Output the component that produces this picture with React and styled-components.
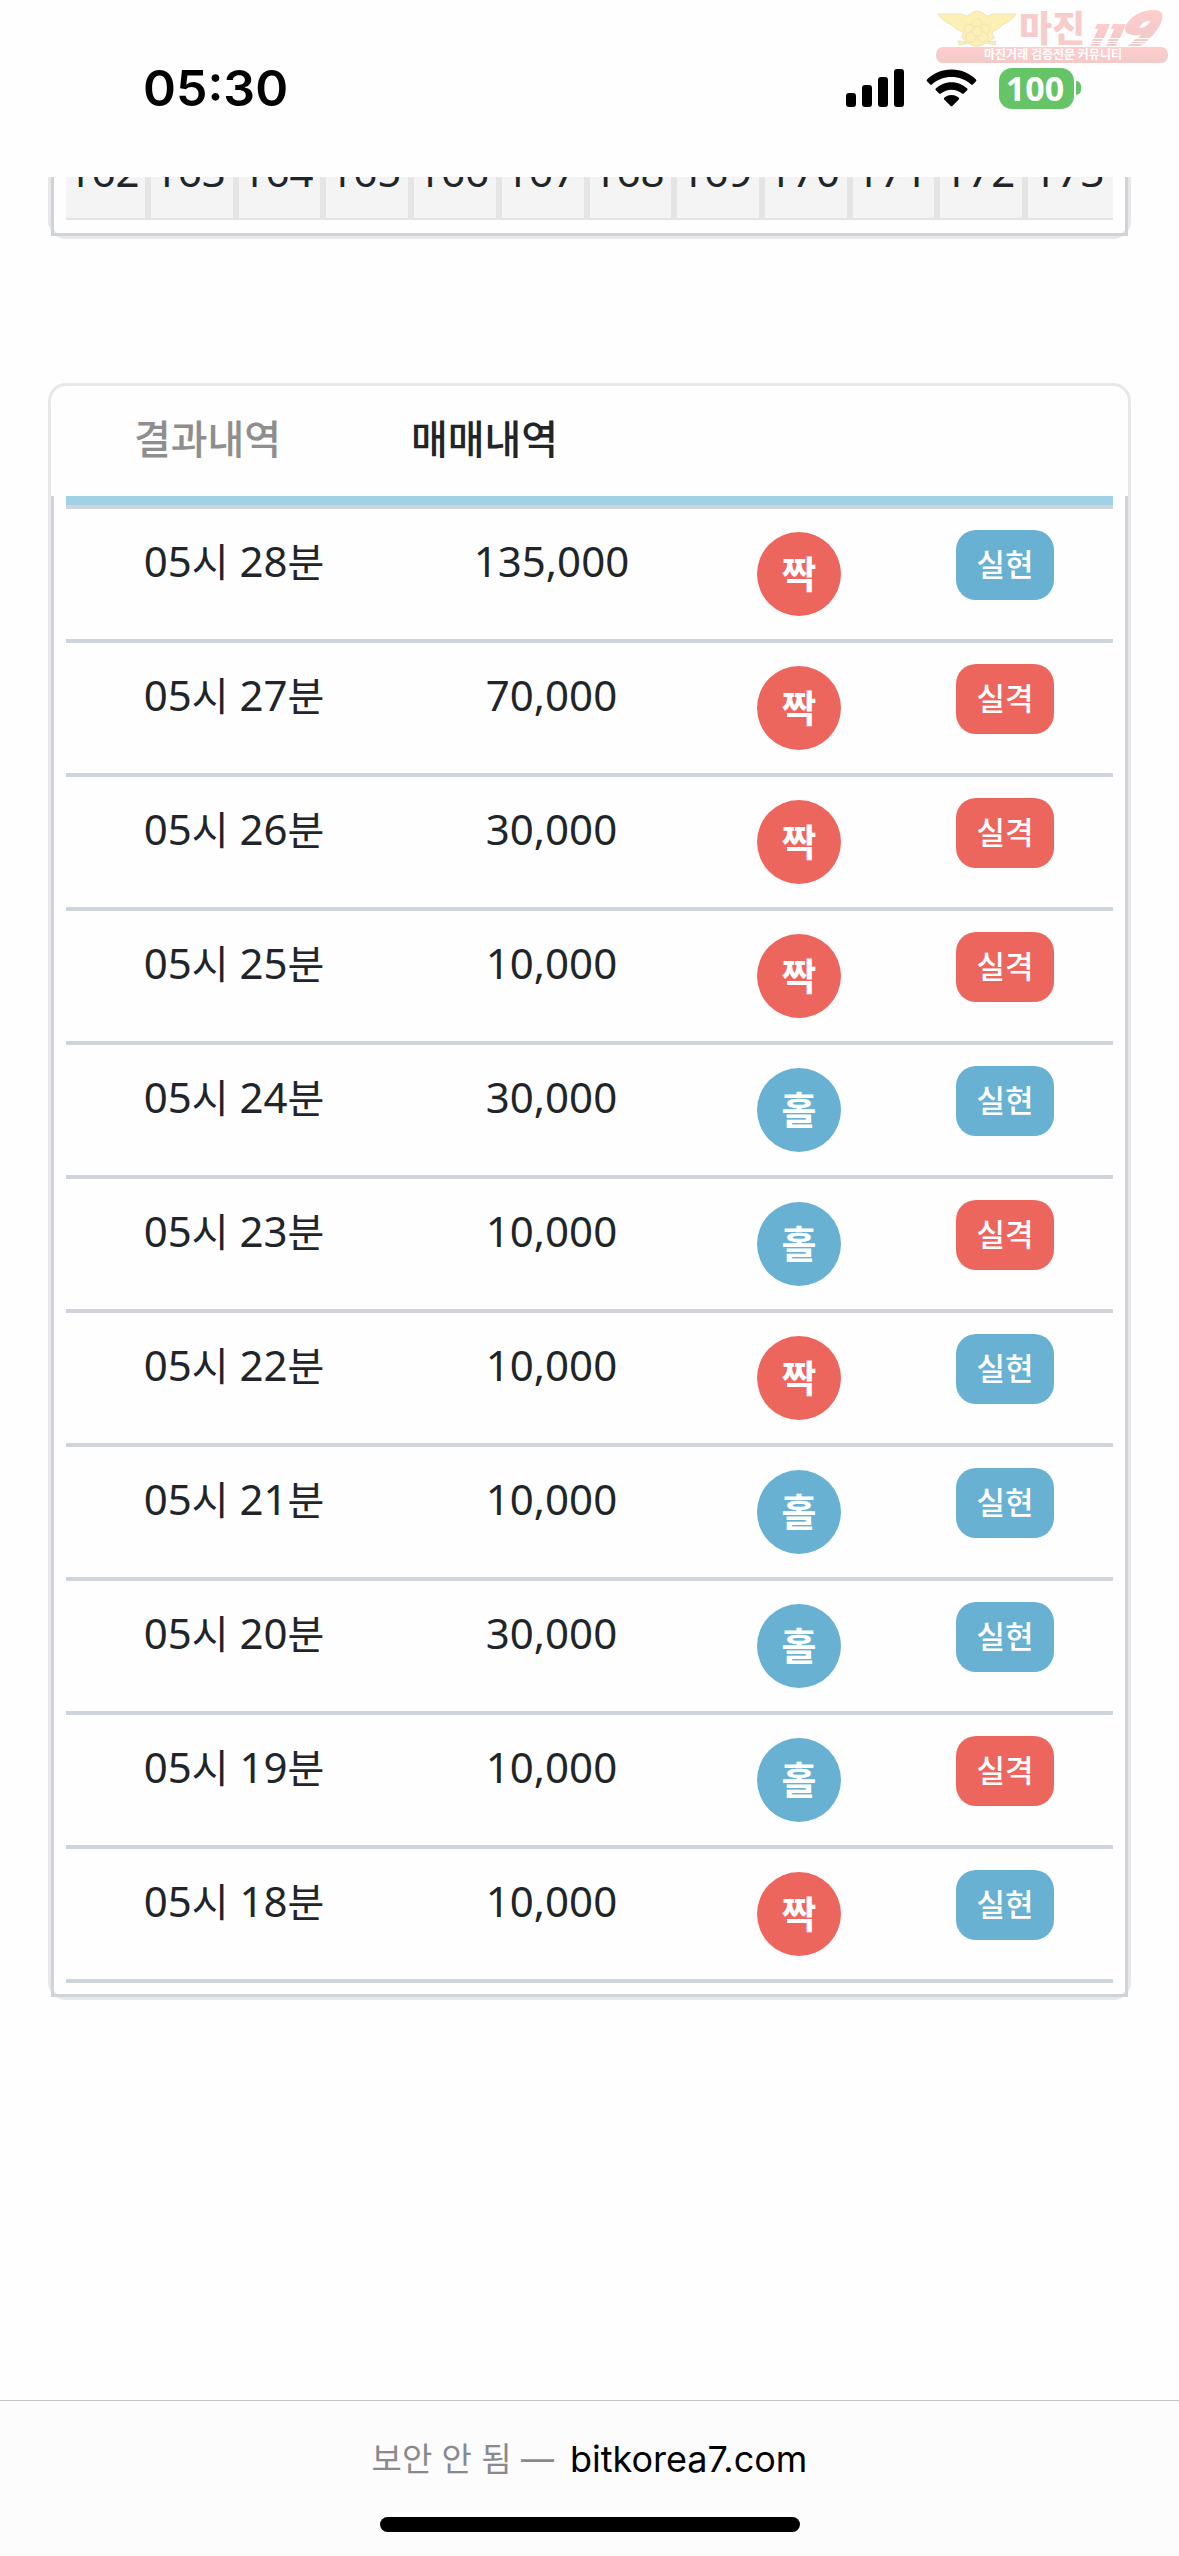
import React, { useState } from "react";
import styled, { createGlobalStyle } from "styled-components";

const GlobalStyle = createGlobalStyle`
  * {
    box-sizing: border-box;
  }

  body {
    margin: 0;
    background: #fefefe;
    color: #212529;
    font-family: "Noto Sans", "Noto Sans CJK KR", sans-serif;
  }
`;

// Styled Components
const Page = styled.div`
  min-height: 100vh;
  display: flex;
  flex-direction: column;
`;

const StatusBar = styled.header`
  position: relative;
  z-index: 1;
  height: 177px;
  padding: 60px 98px 0 143px;
  display: flex;
  align-items: flex-start;
  justify-content: space-between;
  background: #fefefe;
`;

const Clock = styled.time`
  color: #000;
  font-family: Inter, sans-serif;
  font-size: 50px;
  font-weight: 600;
  line-height: 56px;
`;

const StatusIcons = styled.div`
  height: 56px;
  display: flex;
  align-items: center;
  gap: 22px;
`;

const Battery = styled.div`
  display: flex;
  align-items: center;
  gap: 2px;
`;

const BatteryLevel = styled.span`
  width: 75px;
  height: 41px;
  padding-right: 3px;
  border-radius: 13px;
  background: #65c466;
  color: #fff;
  font-size: 34px;
  font-weight: 700;
  line-height: 41px;
  text-align: center;
`;

const BatteryCap = styled.span`
  width: 5px;
  height: 14px;
  border-radius: 0 7px 7px 0;
  background: #65c466;
`;

const Watermark = styled.svg`
  position: absolute;
  top: 8px;
  right: 9px;
  width: 236px;
  height: 58px;
  overflow: visible;
`;

const Content = styled.main`
  flex: 1;
  padding: 0 48px;
`;

const Card = styled.section`
  border: 3px solid #e8e8e8;
  border-radius: ${(props) => (props.$cut ? "0 0 18px 18px" : "18px")};
  border-top-width: ${(props) => (props.$cut ? "0" : "3px")};
  margin-bottom: 144px;
`;

const CardBody = styled.div`
  border: 3px solid #ced4da;
  border-top: none;
  padding: 0 12px ${(props) => props.$bottom};
`;

// only the lower half of the last number row is scrolled into view
const RoundWindow = styled.div`
  height: 43px;
  display: flex;
  align-items: flex-end;
  overflow: hidden;
`;

const RoundTable = styled.table`
  width: 100%;
  table-layout: fixed;
  border-collapse: collapse;
`;

const RoundCell = styled.td`
  height: 88px;
  padding: 0 4px 26px 0;
  border-right: 6px solid #e4e4e4;
  border-bottom: 2px solid #e4e4e4;
  background: #f4f4f4;
  font-size: 42px;
  line-height: 42px;
  text-align: center;
  vertical-align: bottom;

  &:first-child {
    width: 82px;
  }

  &:last-child {
    border-right: none;
  }
`;

const Tabs = styled.nav`
  height: 110px;
  padding: 0 18px;
  display: flex;
`;

const Tab = styled.button`
  width: 277px;
  padding: 0 0 8px;
  border: none;
  background: none;
  color: ${(props) => (props.$active ? "#212529" : "#8e8e8e")};
  font-family: "Noto Sans CJK KR", sans-serif;
  font-size: 40px;
  font-weight: 500;
  cursor: pointer;
`;

const TradeTable = styled.table`
  width: 100%;
  table-layout: fixed;
  border-spacing: 0;
  border-top: 9px solid #a0d1e4;
`;

const TradeRow = styled.tr`
  &:first-child td {
    border-top: 4px solid #ced4da;
    height: 138px;
  }
`;

const TradeCell = styled.td`
  height: 134px;
  padding: 21px 0 0;
  border-bottom: 4px solid #ced4da;
  font-size: 42px;
  line-height: 62px;
  text-align: center;
  vertical-align: top;
`;

const Unit = styled.span`
  font-size: 40px;
`;

const Badge = styled.span`
  display: block;
  margin: 0 auto;
  background: ${(props) => (props.$red ? "#ed665e" : "#68b1d2")};
  color: #fff;
  font-family: "Noto Sans CJK KR", sans-serif;
`;

const PickBadge = styled(Badge)`
  width: 84px;
  height: 84px;
  margin-top: 2px;
  border-radius: 50%;
  font-size: 38px;
  font-weight: 700;
  line-height: 80px;
`;

const ResultBadge = styled(Badge)`
  width: 98px;
  height: 70px;
  border-radius: 20px;
  font-size: 31px;
  font-weight: 500;
  line-height: 66px;
`;

const AddressBar = styled.footer`
  height: 156px;
  padding: 34px 0 24px;
  display: flex;
  flex-direction: column;
  align-items: center;
  justify-content: space-between;
  border-top: 1px solid #c3c3c3;
  background: #fcfcfc;
`;

const Address = styled.div`
  display: flex;
  gap: 16px;
  color: #8a8a8e;
  font-family: Inter, "Noto Sans CJK KR", sans-serif;
  font-size: 33px;
  line-height: 48px;
`;

const Domain = styled.span`
  color: #000;
  font-size: 36px;
`;

const HomeIndicator = styled.div`
  width: 420px;
  height: 15px;
  border-radius: 8px;
  background: #000;
`;

// Table Data
const rounds = [162, 163, 164, 165, 166, 167, 168, 169, 170, 171, 172, 173];

const tabs = ["결과내역", "매매내역"];

const trades = [
  { hour: "05", minute: "28", amount: "135,000", pick: "짝", result: "실현" },
  { hour: "05", minute: "27", amount: "70,000", pick: "짝", result: "실격" },
  { hour: "05", minute: "26", amount: "30,000", pick: "짝", result: "실격" },
  { hour: "05", minute: "25", amount: "10,000", pick: "짝", result: "실격" },
  { hour: "05", minute: "24", amount: "30,000", pick: "홀", result: "실현" },
  { hour: "05", minute: "23", amount: "10,000", pick: "홀", result: "실격" },
  { hour: "05", minute: "22", amount: "10,000", pick: "짝", result: "실현" },
  { hour: "05", minute: "21", amount: "10,000", pick: "홀", result: "실현" },
  { hour: "05", minute: "20", amount: "30,000", pick: "홀", result: "실현" },
  { hour: "05", minute: "19", amount: "10,000", pick: "홀", result: "실격" },
  { hour: "05", minute: "18", amount: "10,000", pick: "짝", result: "실현" },
];

function SignalIcon() {
  return (
    <svg width="58" height="38" viewBox="0 0 58 38">
      <rect x="0" y="24" width="10" height="14" rx="3" />
      <rect x="16" y="16" width="10" height="22" rx="3" />
      <rect x="32" y="8" width="10" height="30" rx="3" />
      <rect x="48" y="0" width="10" height="38" rx="3" />
    </svg>
  );
}

function WifiIcon() {
  return (
    <svg width="51" height="38" viewBox="0 0 51 38">
      <path d="M25.500 0.500C35.500 0.500 44 4.500 50 10.500Q50.800 11.400 50 12.300L46.800 15.600Q46 16.300 45.200 15.600C39.700 10.600 33 8 25.500 8S11.300 10.600 5.800 15.600Q5 16.300 4.200 15.600L1 12.300Q0.200 11.400 1 10.500C7 4.500 15.500 0.500 25.500 0.500Z" />
      <path d="M25.500 13.200C31.800 13.200 37.200 15.700 41.200 19.500Q42 20.400 41.200 21.200L37.800 24.600Q37 25.300 36.100 24.600C33 22 29.500 20.700 25.500 20.700S18 22 14.900 24.600Q14 25.300 13.200 24.600L9.800 21.200Q9 20.400 9.800 19.500C13.800 15.700 19.200 13.200 25.500 13.200Z" />
      <path d="M25.500 26C28.500 26 31 27.200 32.800 28.800Q33.600 29.600 32.800 30.400L26.300 37Q25.500 37.700 24.700 37L18.200 30.400Q17.400 29.600 18.200 28.800C20 27.200 22.500 26 25.500 26Z" />
    </svg>
  );
}

function SiteMark() {
  return (
    <Watermark viewBox="0 0 236 58">
      <defs>
        <linearGradient id="mark" x1="0" y1="0" x2="0" y2="1">
          <stop offset="0" stopColor="#ffcdcd" />
          <stop offset="1" stopColor="#f1caca" />
        </linearGradient>
      </defs>
      <g fill="#fdf0b4" stroke="#eee3ba" strokeWidth="1">
        <path d="M4 6H28Q33 10 36 6Q38 4 43 3Q48 4 50 6Q53 10 58 6H82Q78 13 68 17Q64 22 58 24L60 30L54 34L62 33L61 37L52 35L46 38H40L34 35L25 37L24 33L33 34L28 30L29 24Q22 22 18 17Q8 13 4 6Z" />
        <circle cx="43" cy="16" r="5" />
        <circle cx="35" cy="21" r="5" />
        <circle cx="51" cy="21" r="5" />
        <circle cx="37" cy="29" r="5" />
        <circle cx="49" cy="29" r="5" />
        <circle cx="43" cy="23" r="5" />
      </g>
      <text x="85" y="34" fill="#f9cccc" fontFamily="Noto Sans CJK KR" fontSize="36" fontWeight="900">마진</text>
      <g fill="url(#mark)">
        <path d="M163 16H176L170 30H160L164 21H161Z" />
        <path d="M179 16H192L186 30H176L180 21H177Z" />
        <path d="M219 2C205 2 192 12 191 21C191 26 197 28 207 27L204 30H216C225 21 230 12 228 6C227 3 224 2 219 2ZM210 19C206 21 204 20 207 17C209 14 214 12 216 13C217 14 213 18 210 19Z" fillRule="evenodd" />
      </g>
      <path d="M159 31H169L168 33H158ZM175 31H185L184 33H174ZM202 31H215L213 33H199ZM158 34H168L167 35H157ZM174 34H184L183 35H173ZM198 34H212L211 35H197ZM157 36H167L166 38H156ZM173 36H183L182 38H172ZM196 36H209L206 38H193Z" fill="#f3cbcb" />
      <rect x="2" y="39" width="232" height="16" rx="7" fill="url(#mark)" />
      <text x="119" y="51" fill="#fff" fontFamily="Noto Sans CJK KR" fontSize="12" fontWeight="700" textAnchor="middle">마진거래 검증전문 커뮤니티</text>
    </Watermark>
  );
}

export default function TradeHistoryPage() {
  const [activeTab, setActiveTab] = useState("매매내역");

  return (
    <Page>
      <GlobalStyle />

      <StatusBar>
        <Clock>05:30</Clock>
        <StatusIcons>
          <SignalIcon />
          <WifiIcon />
          <Battery>
            <BatteryLevel>100</BatteryLevel>
            <BatteryCap />
          </Battery>
        </StatusIcons>
        <SiteMark />
      </StatusBar>

      <Content>
        <Card $cut>
          <CardBody $bottom="13px">
            <RoundWindow>
              <RoundTable>
                <tbody>
                  <tr>
                    {rounds.map((round) => (
                      <RoundCell key={round}>{round}</RoundCell>
                    ))}
                  </tr>
                </tbody>
              </RoundTable>
            </RoundWindow>
          </CardBody>
        </Card>

        <Card>
          <Tabs>
            {tabs.map((tab) => (
              <Tab
                key={tab}
                type="button"
                $active={tab === activeTab}
                onClick={() => setActiveTab(tab)}
              >
                {tab}
              </Tab>
            ))}
          </Tabs>
          <CardBody $bottom="11px">
            <TradeTable>
              <colgroup>
                <col width="336" />
                <col width="299" />
                <col width="196" />
                <col width="216" />
              </colgroup>
              <tbody>
                {trades.map((trade) => (
                  <TradeRow key={trade.minute}>
                    <TradeCell>
                      {trade.hour}
                      <Unit>시</Unit> {trade.minute}
                      <Unit>분</Unit>
                    </TradeCell>
                    <TradeCell>{trade.amount}</TradeCell>
                    <TradeCell>
                      <PickBadge $red={trade.pick === "짝"}>{trade.pick}</PickBadge>
                    </TradeCell>
                    <TradeCell>
                      <ResultBadge $red={trade.result === "실격"}>{trade.result}</ResultBadge>
                    </TradeCell>
                  </TradeRow>
                ))}
              </tbody>
            </TradeTable>
          </CardBody>
        </Card>
      </Content>

      <AddressBar>
        <Address>
          <span>보안 안 됨 —</span>
          <Domain>bitkorea7.com</Domain>
        </Address>
        <HomeIndicator />
      </AddressBar>
    </Page>
  );
}
